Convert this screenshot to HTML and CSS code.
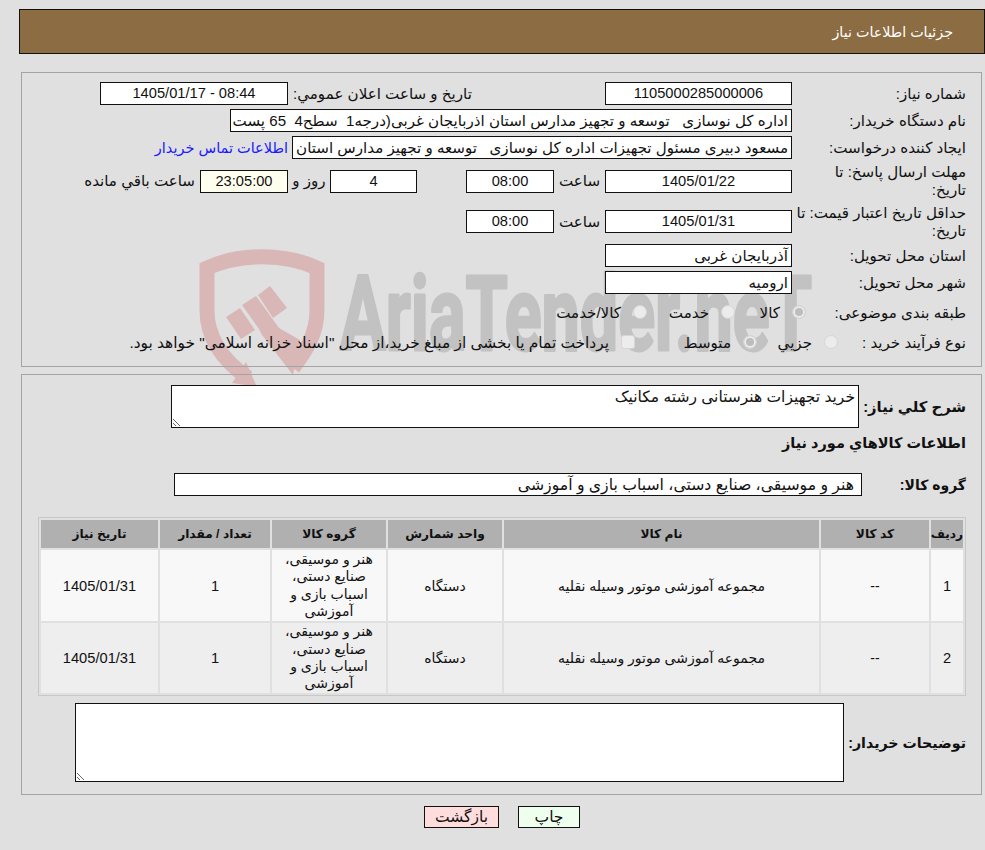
FILE: index.html
```html
<!DOCTYPE html>
<html lang="fa" dir="rtl">
  <head>
    <meta charset="utf-8">
    <title>جزئیات اطلاعات نیاز</title>
    <link rel="stylesheet" href="styles.css">
  </head>
  <body>
    <svg class="watermark" width="630" height="160" viewBox="190 240 630 160">
      <g class="mark-shield">
        <path class="mark-line" d="M248 378 C225 362 207 340 207 310 L207 268 C240 253 285 253 317 268 L317 310 C317 335 305 352 293 368"></path>
        <polygon points="246,362 257,387 232,383"></polygon>
        <polygon points="226,317 240,308 255,330 241,339"></polygon>
        <polygon points="242,305 256,296 279,328 300,340 293,375 262,335 259,329"></polygon>
        <polygon points="258,295 270,286 287,308 273,318"></polygon>
      </g>
      <text class="mark-text" x="340" y="350" textLength="472" lengthAdjust="spacingAndGlyphs">AriaTender.neT</text>
    </svg>

    <div class="page">
      <div class="page-title">جزئیات اطلاعات نیاز</div>

      <div class="panel panel-info">
        <div class="form-row">
          <div class="label">شماره نیاز:</div>
          <div class="field field-md num center">1105000285000006</div>
          <div class="label-inline label-announce">تاریخ و ساعت اعلان عمومي:</div>
          <div class="field field-wide num center">08:44 - 1405/01/17</div>
        </div>

        <div class="form-row">
          <div class="label">نام دستگاه خریدار:</div>
          <div class="field field-buyer">اداره کل نوسازی &nbsp; توسعه و تجهیز مدارس استان اذربایجان غربی(درجه1 &nbsp;سطح4 &nbsp;65 پست</div>
        </div>

        <div class="form-row">
          <div class="label">ایجاد کننده درخواست:</div>
          <div class="field field-creator">مسعود دبیری مسئول تجهیزات اداره کل نوسازی &nbsp; توسعه و تجهیز مدارس استان</div>
          <a class="contact-link" href="#">اطلاعات تماس خریدار</a>
        </div>

        <div class="form-row row-tall">
          <div class="label">مهلت ارسال پاسخ: تا<br>تاریخ:</div>
          <div class="field field-md num center">1405/01/22</div>
          <div class="label-inline label-time">ساعت</div>
          <div class="field field-sm num center">08:00</div>
          <div class="spacer"></div>
          <div class="field field-days num center">4</div>
          <div class="label-inline label-days">روز و</div>
          <div class="field field-sm num center field-remain">23:05:00</div>
          <div class="label-inline label-remain">ساعت باقي مانده</div>
        </div>

        <div class="form-row row-tall">
          <div class="label">حداقل تاریخ اعتبار قیمت: تا<br>تاریخ:</div>
          <div class="field field-md num center">1405/01/31</div>
          <div class="label-inline label-time">ساعت</div>
          <div class="field field-sm num center">08:00</div>
        </div>

        <div class="form-row">
          <div class="label">استان محل تحویل:</div>
          <div class="field field-md">آذربایجان غربی</div>
        </div>

        <div class="form-row">
          <div class="label">شهر محل تحویل:</div>
          <div class="field field-md">ارومیه</div>
        </div>

        <div class="form-row row-choice">
          <div class="label label-subject">طبقه بندی موضوعی:</div>
          <div class="choice choice-goods"><span class="radio checked"></span>کالا</div>
          <div class="choice choice-service"><span class="radio"></span>خدمت</div>
          <div class="choice"><span class="radio"></span>کالا/خدمت</div>
        </div>

        <div class="form-row row-choice">
          <div class="label label-process">نوع فرآیند خرید :</div>
          <div class="choice choice-minor"><span class="radio"></span>جزیي</div>
          <div class="choice choice-medium"><span class="radio checked"></span>متوسط</div>
          <div class="choice choice-note"><span class="check"></span>پرداخت تمام یا بخشی از مبلغ خرید،از محل "اسناد خزانه اسلامی" خواهد بود.</div>
        </div>
      </div>

      <div class="panel panel-items">
        <div class="form-row row-summary">
          <div class="label label-strong">شرح کلي نیاز:</div>
          <textarea class="text-box text-summary" readonly>خرید تجهیزات هنرستانی رشته مکانیک</textarea>
        </div>

        <div class="section-title">اطلاعات کالاهاي مورد نیاز</div>

        <div class="form-row row-group">
          <div class="label label-strong">گروه کالا:</div>
          <div class="field field-group">هنر و موسیقی، صنایع دستی، اسباب بازی و آموزشی</div>
        </div>

        <table class="items">
          <colgroup>
            <col class="col-row">
            <col class="col-code">
            <col class="col-name">
            <col class="col-unit">
            <col class="col-cat">
            <col class="col-qty">
            <col class="col-date">
          </colgroup>
          <tr>
            <th>ردیف</th>
            <th>کد کالا</th>
            <th>نام کالا</th>
            <th>واحد شمارش</th>
            <th>گروه کالا</th>
            <th>تعداد / مقدار</th>
            <th>تاریخ نیاز</th>
          </tr>
          <tr>
            <td class="num">1</td>
            <td>--</td>
            <td>مجموعه آموزشی موتور وسیله نقلیه</td>
            <td>دستگاه</td>
            <td class="cat-cell">هنر و موسیقی، صنایع دستی، اسباب بازی و آموزشی</td>
            <td class="num">1</td>
            <td class="num">1405/01/31</td>
          </tr>
          <tr>
            <td class="num">2</td>
            <td>--</td>
            <td>مجموعه آموزشی موتور وسیله نقلیه</td>
            <td>دستگاه</td>
            <td class="cat-cell">هنر و موسیقی، صنایع دستی، اسباب بازی و آموزشی</td>
            <td class="num">1</td>
            <td class="num">1405/01/31</td>
          </tr>
        </table>

        <div class="form-row row-notes">
          <div class="label label-strong label-notes">توضیحات خریدار:</div>
          <textarea class="text-box text-notes" readonly></textarea>
        </div>
      </div>

      <div class="actions">
        <button class="btn btn-print" type="button">چاپ</button>
        <button class="btn btn-back" type="button">بازگشت</button>
      </div>
    </div>
  </body>
</html>
```

FILE: styles.css
```css
html,
body {
  margin: 0;
  padding: 0;
}

body {
  position: relative;
  height: 850px;
  overflow: hidden;
  background-color: #e0e0e0;
  font-family: "Liberation Sans", "DejaVu Sans", sans-serif;
  font-size: 15.1px;
  color: #111;
}

.watermark {
  position: absolute;
  left: 190px;
  top: 240px;
  direction: ltr;
}

.mark-shield {
  fill: #d9b7b7;
}

.mark-line {
  fill: none;
  stroke: #d9b7b7;
  stroke-width: 15;
}

.mark-text {
  direction: ltr;
  fill: #c2c2c2;
  stroke: #c2c2c2;
  stroke-width: 3;
  stroke-linejoin: round;
  font-family: "Roboto", "Liberation Sans", sans-serif;
  font-size: 104px;
  font-weight: bold;
}

.page {
  position: relative;
  padding-top: 9px;
}

.page-title {
  box-sizing: border-box;
  width: 966px;
  height: 45px;
  padding-right: 31px;
  font-size: 14.3px;
  line-height: 44px;
  background-color: #8c6c42;
  border: 1px solid #111;
  color: #fff;
}

.panel {
  box-sizing: border-box;
  width: 961px;
  margin-right: 3px;
  border: 1px solid #a4a4a4;
}

.panel-info {
  position: relative;
  top: 18px;
  height: 295px;
  padding: 9px 15px 0 0;
}

.panel-items {
  position: relative;
  top: 25px;
  height: 421px;
  padding: 10px 15px 0 0;
}

.form-row {
  display: flex;
  align-items: center;
  min-height: 23px;
  margin-bottom: 4px;
}

.row-tall {
  height: 36px;
}

.row-tall + .row-tall {
  height: 37px;
}

.row-choice {
  height: 30px;
  margin-bottom: 0;
}

.label {
  flex: none;
  width: 173px;
  margin-left: 1px;
  line-height: 18px;
}

.label-subject {
  width: 159px;
}

.label-process {
  width: 127px;
}

.label-strong {
  font-size: 14.5px;
  font-weight: bold;
}

.label-inline {
  flex: none;
  text-align: center;
}

.label-announce {
  box-sizing: border-box;
  width: 317px;
  padding-left: 5px;
  text-align: left;
}

.label-time {
  width: 51px;
}

.label-days {
  width: 42px;
}

.label-remain {
  margin-right: 5px;
}

.spacer {
  flex: none;
  width: 49px;
}

.field {
  box-sizing: border-box;
  flex: none;
  height: 23px;
  padding: 0 3px;
  overflow: hidden;
  line-height: 21px;
  white-space: nowrap;
  background-color: #fff;
  border: 1px solid #111;
}

.field-md {
  width: 187px;
}

.field-wide {
  width: 188px;
}

.field-sm {
  width: 88px;
}

.field-days {
  width: 87px;
}

.field-remain {
  background-color: #fffff0;
}

.field-buyer {
  width: 562px;
}

.field-creator {
  width: 500px;
}

.field-group {
  width: 688px;
  padding-right: 7px;
  font-size: 15.7px;
}

.center {
  text-align: center;
}

.num {
  font-size: 14.67px;
}

.contact-link {
  margin-right: 4px;
  font-size: 14.5px;
  color: #1a1aff;
  text-decoration: none;
  white-space: nowrap;
}

.choice {
  display: flex;
  align-items: center;
  flex: none;
  white-space: nowrap;
}

.choice-goods {
  width: 71px;
}

.choice-service {
  width: 88px;
}

.choice-minor {
  width: 81px;
}

.choice-medium {
  width: 122px;
}

.choice-note {
  font-size: 15.4px;
}

.radio,
.check {
  box-sizing: border-box;
  flex: none;
  width: 14px;
  height: 14px;
  margin-left: 12px;
  margin-bottom: 3px;
  background-color: #ececec;
  border: 1px solid #d6d6d6;
  border-radius: 50%;
}

.radio.checked {
  background-color: #bdbdbd;
  box-shadow: inset 0 0 0 2px #ececec;
}

.check {
  border-radius: 3px;
}

.section-title {
  height: 30px;
  font-size: 14.5px;
  font-weight: bold;
  line-height: 30px;
}

.row-summary {
  height: 43px;
  margin-bottom: 0;
}

.row-summary .label {
  width: 106px;
  font-size: 14.8px;
}

.row-group {
  margin-top: 15px;
  margin-bottom: 21px;
}

.row-group .label {
  width: 103px;
  font-size: 14px;
}

.text-box {
  box-sizing: border-box;
  flex: none;
  padding: 2px 3px;
  font: inherit;
  color: inherit;
  background-color: #fff;
  border: 1px solid #111;
  border-radius: 0;
  outline: none;
}

.text-summary {
  width: 688px;
  height: 43px;
  font-size: 15.5px;
}

.text-notes {
  width: 769px;
  height: 79px;
}

.row-notes {
  margin-top: 7px;
}

.row-notes .label-notes {
  width: 122px;
  margin-left: 0;
  font-size: 14.2px;
  white-space: nowrap;
}

.items {
  box-sizing: border-box;
  width: 928px;
  table-layout: fixed;
  border: 1px solid #c8c8c8;
  border-spacing: 2px;
}

.col-row { width: 32px; }
.col-code { width: 108px; }
.col-name { width: 315px; }
.col-unit { width: 114px; }
.col-cat { width: 114px; }
.col-qty { width: 110px; }
.col-date { width: 117px; }

.items th {
  height: 28px;
  padding: 0;
  font-size: 12.2px;
  background-color: #b0b0b0;
}

.items td {
  height: 70px;
  padding: 0;
  font-size: 14px;
  text-align: center;
  background-color: #f8f8f8;
}

.items tr:nth-child(2) td {
  height: 71px;
}

.items tr:nth-child(3) td {
  background-color: #eeeeee;
}

.items .cat-cell {
  padding: 0 8px;
  line-height: 17.3px;
}

.items .num {
  font-size: 14.67px;
}

.actions {
  position: relative;
  top: 36px;
  display: flex;
  justify-content: center;
  gap: 19px;
  width: 156px;
  margin-right: 405px;
}

.btn {
  height: 22px;
  padding: 0;
  font-family: inherit;
  font-size: 15.5px;
  color: #111;
  border: 1px solid #111;
}

.btn-back {
  width: 75px;
  background-color: #ffdddd;
}

.btn-print {
  width: 62px;
  background-color: #eeffee;
}
```
